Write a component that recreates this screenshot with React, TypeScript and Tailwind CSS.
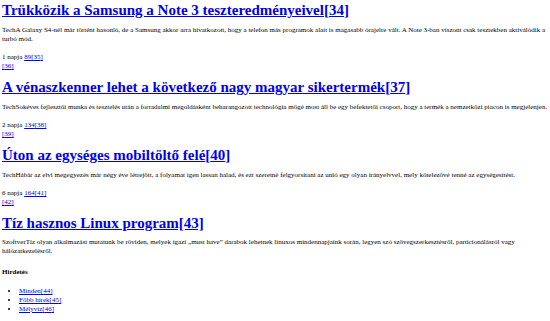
import React from 'react';

interface Article {
  id: number;
  title: string;
  text: string;
  age: string;
  count: string;
  refA: number;
  refB: number;
}

const articles: Article[] = [
  {
    id: 34,
    title: 'Trükközik a Samsung a Note 3 teszteredményeivel',
    text: 'TechA Galaxy S4-nél már történt hasonló, de a Samsung akkor arra hivatkozott, hogy a telefon más programok alatt is magasabb órajelre vált. A Note 3-ban viszont csak tesztekben aktiválódik a turbó mód.',
    age: '1 napja',
    count: '89',
    refA: 35,
    refB: 36
  },
  {
    id: 37,
    title: 'A vénaszkenner lehet a következő nagy magyar sikertermék',
    text: 'TechSokéves fejlesztői munka és tesztelés után a forradalmi megoldásként beharangozott technológia mögé most áll be egy befektetői csoport, hogy a termék a nemzetközi piacon is megjelenjen.',
    age: '2 napja',
    count: '134',
    refA: 38,
    refB: 39
  },
  {
    id: 40,
    title: 'Úton az egységes mobiltöltő felé',
    text: 'TechHábár az elvi megegyezés már négy éve létrejött, a folyamat igen lassan halad, és ezt szeretné felgyorsítani az unió egy olyan irányelvvel, mely kötelezővé tenné az egységesítést.',
    age: '6 napja',
    count: '164',
    refA: 41,
    refB: 42
  }
];

const ads = [
  { label: 'Minden', ref: 44 },
  { label: 'Főbb hírek', ref: 45 },
  { label: 'Mélyvíz', ref: 46 }
];

const linkCls = 'text-[#0000ee] underline';

export default function App() {
  return (
    <div className="w-[550px] h-[321px] overflow-hidden bg-white text-black px-[2px] pt-[1px] font-['Liberation_Serif',serif]">
      {articles.map(a => (
        <div key={a.id}>
          {/* Title */}
          <h1 className="text-[15px] font-bold leading-[18px] mb-[7px]">
            <a href="#" className={linkCls}>{a.title}[{a.id}]</a>
          </h1>
          <p className="text-[7px] leading-[9px] mb-[9px]">{a.text}</p>
          <p className="text-[7px] leading-[9px] mb-[7px]">
            {a.age} <a href="#" className={linkCls}>{a.count}[{a.refA}]</a>
            <br />
            <a href="#" className={linkCls}>[{a.refB}]</a>
          </p>
        </div>
      ))}

      <h1 className="text-[15px] font-bold leading-[18px] mb-[6px]">
        <a href="#" className={linkCls}>Tíz hasznos Linux program[43]</a>
      </h1>
      <p className="text-[7px] leading-[9px] mb-[12px]">
        SzoftverTíz olyan alkalmazást mutatunk be röviden, melyek igazi „must have” darabok lehetnek linuxos mindennapjaink során, legyen szó szövegszerkesztésről, particionálásról vagy hálózatkezelésről.
      </p>

      {/* Hirdetés */}
      <h4 className="text-[7px] leading-[9px] font-bold mb-[10px]">Hirdetés</h4>
      <ul className="text-[7px] leading-[9px] list-disc pl-[17px]">
        {ads.map(ad => (
          <li key={ad.ref}>
            <a href="#" className={linkCls}>{ad.label}[{ad.ref}]</a>
          </li>
        ))}
      </ul>
    </div>
  );
}
